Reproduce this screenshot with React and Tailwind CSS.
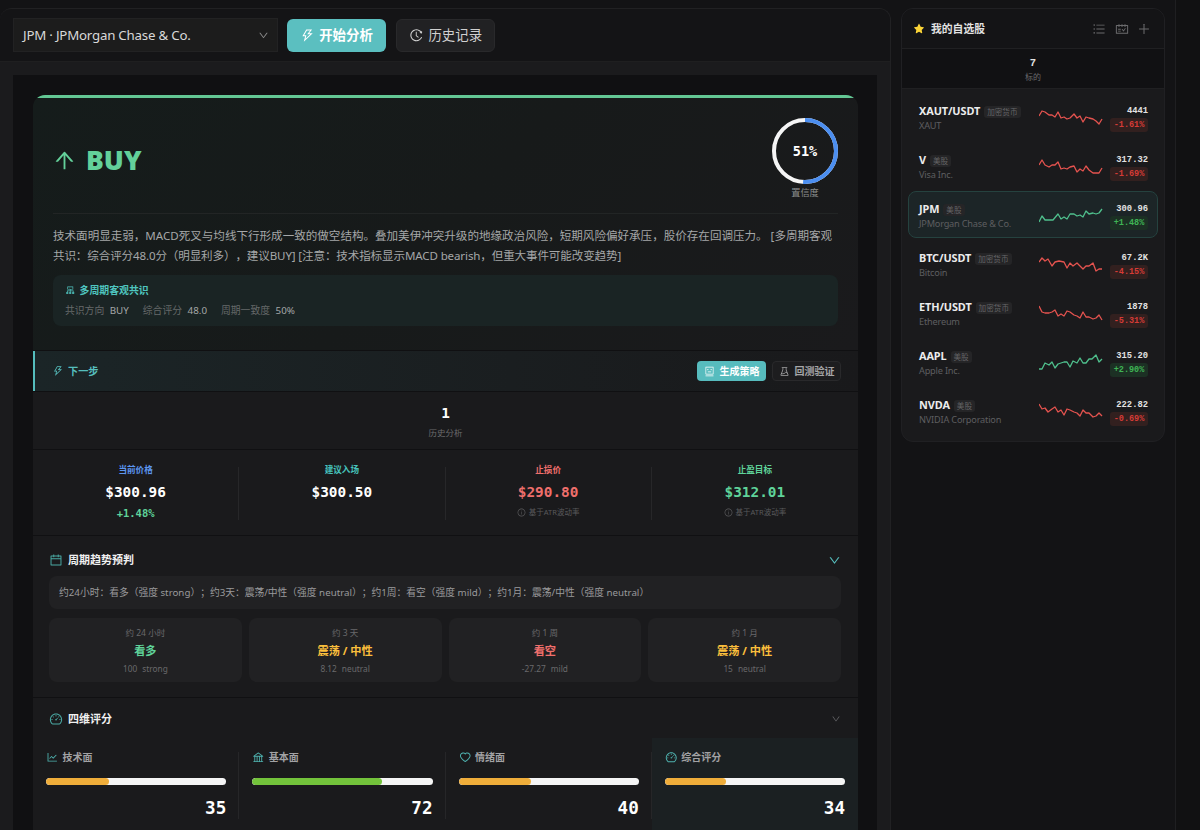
import React from "react";
import {
  AiFillStar,
  AiOutlineArrowUp,
  AiOutlineBank,
  AiOutlineCalendar,
  AiOutlineCluster,
  AiOutlineDashboard,
  AiOutlineDown,
  AiOutlineExperiment,
  AiOutlineHeart,
  AiOutlineHistory,
  AiOutlineInfoCircle,
  AiOutlineLineChart,
  AiOutlinePlus,
  AiOutlineRobot,
  AiOutlineSchedule,
  AiOutlineThunderbolt,
  AiOutlineUnorderedList,
} from "react-icons/ai";

const watchlist = [
  { symbol: "XAUT/USDT", tag: "加密货币", name: "XAUT", price: "4441", change: "-1.61%", points: "0,9 3,4 6,5 10,8 13,8 16,10 19,5 22,11 25,10 28,12 31,11 35,7 38,11 41,9 44,15 47,10 50,11 54,12 57,14 60,17 63,12" },
  { symbol: "V", tag: "美股", name: "Visa Inc.", price: "317.32", change: "-1.69%", points: "0,9 3,4 6,9 10,11 13,9 16,9 19,6 22,13 25,12 28,13 31,11 35,10 38,16 41,13 44,15 47,10 50,14 54,17 57,17 60,17 63,12" },
  { symbol: "JPM", tag: "美股", name: "JPMorgan Chase & Co.", price: "300.96", change: "+1.48%", up: true, active: true, points: "0,17 3,11 6,15 10,15 14,15 19,9 22,14 25,12 28,14 31,9 35,9 38,11 41,10 44,12 47,6 50,9 54,8 57,9 60,8 63,4" },
  { symbol: "BTC/USDT", tag: "加密货币", name: "Bitcoin", price: "67.2K", change: "-4.15%", points: "0,8 3,4 6,7 9,5 13,12 16,8 20,7 25,8 28,14 31,9 34,12 38,9 41,12 44,15 47,12 50,12 54,9 57,17 60,15 63,15" },
  { symbol: "ETH/USDT", tag: "加密货币", name: "Ethereum", price: "1878", change: "-5.31%", points: "0,3 3,9 6,10 10,10 13,9 16,7 19,13 22,11 25,13 28,8 31,9 35,12 38,13 41,15 44,9 47,14 50,14 54,16 57,15 60,12 63,17" },
  { symbol: "AAPL", tag: "美股", name: "Apple Inc.", price: "315.20", change: "+2.90%", up: true, points: "0,17 3,17 6,11 10,13 13,10 16,16 19,12 22,11 25,10 28,10 31,15 34,9 38,11 41,6 44,11 47,11 50,7 53,7 57,3 60,10 63,7" },
  { symbol: "NVDA", tag: "美股", name: "NVIDIA Corporation", price: "222.82", change: "-0.69%", points: "0,3 3,8 6,7 9,11 13,8 16,6 19,11 22,9 25,14 28,8 31,9 35,11 38,12 41,15 44,9 47,12 50,12 54,16 57,15 60,12 63,15" },
];

const prices = [
  { label: "当前价格", value: "$300.96", labelColor: "text-[#5c96f0]", color: "text-white", change: "+1.48%" },
  { label: "建议入场", value: "$300.50", labelColor: "text-[#46c3bd]", color: "text-white" },
  { label: "止损价", value: "$290.80", labelColor: "text-[#ef6f6c]", color: "text-[#ef6f6c]", note: true },
  { label: "止盈目标", value: "$312.01", labelColor: "text-[#5fd39a]", color: "text-[#5fd39a]", note: true },
];

const trends = [
  { label: "约 24 小时", value: "看多", color: "text-[#5fd39a]", score: "100", level: "strong" },
  { label: "约 3 天", value: "震荡 / 中性", color: "text-[#fbbf3c]", score: "8.12", level: "neutral" },
  { label: "约 1 周", value: "看空", color: "text-[#ef6f6c]", score: "-27.27", level: "mild" },
  { label: "约 1 月", value: "震荡 / 中性", color: "text-[#fbbf3c]", score: "15", level: "neutral" },
];

const scores = [
  { label: "技术面", icon: AiOutlineLineChart, value: 35, bar: "bg-[#efad3a]" },
  { label: "基本面", icon: AiOutlineBank, value: 72, bar: "bg-[#73c33b]" },
  { label: "情绪面", icon: AiOutlineHeart, value: 40, bar: "bg-[#efad3a]" },
  { label: "综合评分", icon: AiOutlineDashboard, value: 34, bar: "bg-[#efad3a]", total: true },
];

const Toolbar = () => (
  <div className="flex h-[53px] items-center border-b border-[#1f1f20] bg-[#141416] pl-[13px]">
    <div className="flex h-[34px] w-[265px] items-center justify-between border border-[#222223] bg-[#1c1c1c] pr-[8px] pl-[9px]">
      <span className="pt-px text-[13.3px] tracking-[-0.22px] text-[#d8d8d8]">JPM · JPMorgan Chase &amp; Co.</span>
      <AiOutlineDown className="text-[11px] text-[#8a8a8a]" />
    </div>
    <button className="ml-[9px] flex h-[33px] w-[99px] items-center justify-center gap-[4px] rounded-md bg-[#5bbfc0] text-[13.4px] font-bold text-white">
      <AiOutlineThunderbolt className="text-[15px]" />
      <span>开始分析</span>
    </button>
    <button className="ml-[10px] flex h-[33px] w-[99px] items-center justify-center gap-[5px] rounded-md border border-[#29292b] bg-[#212123] text-[13.4px] text-[#d0d0d0]">
      <AiOutlineHistory className="text-[14.5px]" />
      <span>历史记录</span>
    </button>
  </div>
);

const ConfidenceRing = () => (
  <div className="flex w-[66px] flex-col items-center">
    <div className="grid size-[66px] place-items-center">
      <svg viewBox="0 0 66 66" className="col-start-1 row-start-1 size-[66px]" fill="none" strokeWidth="4">
        <circle cx="33" cy="33" r="31" stroke="#f5f5f5" />
        <circle cx="33" cy="33" r="31" stroke="#4b8ef0" pathLength="100" strokeDasharray="51 100" transform="rotate(-90 33 33)" />
      </svg>
      <span className="col-start-1 row-start-1 font-['DejaVu_Sans_Mono',monospace] text-[13.5px] font-bold text-white">51%</span>
    </div>
    <span className="mt-[2px] text-[9.2px] leading-[14px] text-[#8b8d8d]">置信度</span>
  </div>
);

const Decision = () => (
  <section className="h-[255px] overflow-hidden rounded-t-xl bg-linear-135 from-[#151c1b] via-[#171a1a] to-[#1a1a1c]">
    <div className="h-[3px] bg-[#63c794]" />
    <div className="px-[20px]">
      <div className="flex h-[116px] items-start justify-between border-b border-[#222525] pt-[20px]">
        <div className="flex items-center gap-[9px] pt-[22px] text-[#63d09a]">
          <AiOutlineArrowUp className="-ml-px text-[25px]" />
          <span className="font-['Noto_Sans','Open_Sans',sans-serif] text-[26.5px] leading-[40px] font-black">BUY</span>
        </div>
        <ConfidenceRing />
      </div>
      <p className="mt-[12px] text-[11.55px] leading-[20.3px] whitespace-nowrap text-[#a5a7a8] [text-spacing-trim:space-all]">
        技术面明显走弱，MACD死叉与均线下行形成一致的做空结构。叠加美伊冲突升级的地缘政治风险，短期风险偏好承压，股价存在回调压力。 [多周期客观
        <br />
        <span className="tracking-[-0.12px]">共识：综合评分48.0分（明显利多），建议BUY] [注意：技术指标显示MACD bearish，但重大事件可能改变趋势]</span>
      </p>
      <div className="mt-[8px] h-[51px] rounded-lg bg-[#1a2424] pt-[8px] pl-[12px]">
        <div className="flex h-[16px] items-center gap-[4px] text-[#4fc4bf]">
          <AiOutlineCluster className="text-[10.5px]" />
          <span className="text-[9.9px] font-bold">多周期客观共识</span>
        </div>
        <div className="mt-[4px] flex gap-[14px] text-[9.8px] leading-[16px] text-[#66696a]">
          <span>共识方向 <b className="ml-[3px] font-normal text-[#a5a7a8]">BUY</b></span>
          <span>综合评分 <b className="ml-[3px] font-normal text-[#a5a7a8]">48.0</b></span>
          <span>周期一致度 <b className="ml-[3px] font-normal text-[#a5a7a8]">50%</b></span>
        </div>
      </div>
    </div>
  </section>
);

const NextStep = () => (
  <section className="flex h-[40px] items-center border-l-2 border-[#55bdbd] bg-linear-to-r from-[#1b2527] to-[#19191b] pr-[17px] pl-[17px]">
    <AiOutlineThunderbolt className="text-[12px] text-[#56bebd]" />
    <span className="ml-[4px] pt-px text-[10.2px] font-bold text-[#56bebd]">下一步</span>
    <button className="ml-auto flex h-[20px] w-[69px] items-center justify-center gap-[5px] rounded bg-[#57bcbe] text-[10px] font-bold text-white">
      <AiOutlineRobot className="text-[11px]" />
      生成策略
    </button>
    <button className="ml-[6px] flex h-[20px] w-[69px] items-center justify-center gap-[5px] rounded border border-[#29292b] bg-[#1d1d1f] text-[10px] font-bold text-[#a6a6a8]">
      <AiOutlineExperiment className="text-[11px]" />
      回测验证
    </button>
  </section>
);

const PriceRow = () => (
  <section className="grid h-[85px] grid-cols-4 bg-[#1a1a1c]">
    {prices.map((item, index) => (
      <div key={index} className="flex py-[17px]">
        <div className="-mt-[4px] flex flex-1 flex-col items-center">
          <span className={`text-[8.6px] leading-[14px] font-bold ${item.labelColor}`}>{item.label}</span>
          <span className={`mt-[5px] font-['DejaVu_Sans_Mono',monospace] text-[14.4px] leading-[20px] font-bold ${item.color}`}>{item.value}</span>
          {item.change && (
            <span className="mt-[4px] font-['DejaVu_Sans_Mono',monospace] text-[10.5px] leading-[14px] font-bold text-[#5fd39a]">{item.change}</span>
          )}
          {item.note && (
            <span className="mt-[4px] flex items-center gap-[3px] text-[7.5px] leading-[13px] text-[#59595b]">
              <AiOutlineInfoCircle className="text-[9px]" />
              基于ATR波动率
            </span>
          )}
        </div>
        {index < 3 && <div className="w-px bg-[#272729]" />}
      </div>
    ))}
  </section>
);

const TrendSection = () => (
  <section className="h-[161px] bg-[#1a1a1c] pr-[17px] pl-[16px]">
    <div className="flex h-[40px] items-center pt-[8px]">
      <AiOutlineCalendar className="text-[14px] text-[#4aa9a3]" />
      <span className="ml-[5px] text-[11px] font-bold text-[#f0f0f0]">周期趋势预判</span>
      <AiOutlineDown className="ml-auto text-[13px] text-[#56bebd]" />
    </div>
    <div className="flex h-[33px] items-center rounded-lg bg-[#212123] px-[10px] pt-px text-[9.75px] whitespace-nowrap text-[#9a9a9c] [text-spacing-trim:space-all]">
      约24小时：看多（强度 strong）；约3天：震荡/中性（强度 neutral）；约1周：看空（强度 mild）；约1月：震荡/中性（强度 neutral）
    </div>
    <div className="mt-[9px] grid grid-cols-4 gap-[7px]">
      {trends.map((item, index) => (
        <div key={index} className="flex h-[64px] flex-col items-center rounded-lg bg-[#212123] pt-[8px]">
          <span className="text-[8.5px] leading-[14px] text-[#69696b]">{item.label}</span>
          <span className={`mt-[2px] text-[11.2px] leading-[18px] font-bold ${item.color}`}>{item.value}</span>
          <span className="mt-[2px] flex gap-[5px] text-[8.3px] leading-[14px] text-[#69696b]">
            <span>{item.score}</span>
            <span>{item.level}</span>
          </span>
        </div>
      ))}
    </div>
  </section>
);

const ScoreSection = () => (
  <section className="h-[132px] bg-[#1a1a1c]">
    <div className="flex h-[40px] items-center pt-[2px] pr-[17px] pl-[16px]">
      <AiOutlineDashboard className="text-[14px] text-[#4aa9a3]" />
      <span className="ml-[5px] text-[11px] font-bold text-[#f0f0f0]">四维评分</span>
      <AiOutlineDown className="ml-auto text-[10px] text-[#666668]" />
    </div>
    <div className="grid h-[92px] grid-cols-4">
      {scores.map((item, index) => (
        <div key={index} className={`flex py-[14px] ${item.total ? "bg-[#1b2022]" : ""}`}>
          <div className="flex-1 pr-[12px] pl-[13px]">
            <div className="-mt-[4px] flex h-[18px] items-center gap-[4px]">
              <item.icon className="text-[12.5px] text-[#4fb3b0]" />
              <span className="text-[10px] font-bold text-[#a2a2a4]">{item.label}</span>
            </div>
            <div className="mt-[12px] h-[7px] overflow-hidden rounded-full bg-[#f5f5f5]">
              <div className={`h-full rounded-full ${item.bar}`} style={{ width: `${item.value}%` }} />
            </div>
            <div className="mt-[12px] text-right font-['DejaVu_Sans_Mono',monospace] text-[17.6px] leading-[22px] font-bold text-white">{item.value}</div>
          </div>
          <div className={`w-px ${item.total ? "" : "bg-[#262628]"}`} />
        </div>
      ))}
    </div>
  </section>
);

const WatchRow = ({ item }) => (
  <div className={`flex h-[47px] items-center rounded-lg border pr-[9px] pl-[10px] ${item.active ? "border-[#25423f] bg-[#1c2527]" : "border-transparent"}`}>
    <div className="w-[119.5px] pt-[2px] whitespace-nowrap">
      <div className="flex items-center gap-[4px]">
        <span className="text-[10.9px] leading-[15px] font-bold tracking-[-0.1px] text-[#ececec]">{item.symbol}</span>
        <span className="mt-[3px] rounded-[3px] bg-[#252527] px-[3px] text-[7.6px] leading-[12px] text-[#646466]">{item.tag}</span>
      </div>
      <div className="pt-px text-[9.2px] leading-[14px] tracking-[-0.2px] text-[#5e5e60]">{item.name}</div>
    </div>
    <svg viewBox="0 0 64 20" className="h-[20px] w-[64px]" fill="none">
      <polyline points={item.points} stroke={item.up ? "#4fc08d" : "#e5534f"} strokeWidth="1.3" strokeLinejoin="round" />
    </svg>
    <div className="ml-auto flex flex-col items-end pt-[2px] font-['Liberation_Mono',monospace]">
      <span className="text-[8.8px] leading-[14px] font-bold text-[#e2e2e2]">{item.price}</span>
      <span className={`w-[38px] rounded-[3px] text-center text-[8.5px] leading-[14px] font-bold ${item.up ? "bg-[#1c3024] text-[#3fb455]" : "bg-[#32201f] text-[#d53b36]"}`}>{item.change}</span>
    </div>
  </div>
);

const Watchlist = () => (
  <aside className="mt-[8px] ml-[10px] flex h-[434px] w-[264px] flex-col overflow-hidden rounded-xl border border-[#202023] bg-[#1a1a1c]">
    <div className="flex h-[40px] items-center border-b border-[#202022] bg-[#141416] pr-[13px] pl-[11px]">
      <AiFillStar className="text-[12px] text-[#fbd437]" />
      <span className="ml-[6px] pt-px text-[10.8px] font-bold text-[#e2e2e2]">我的自选股</span>
      <div className="ml-auto flex gap-[8.5px] text-[14px] text-[#6b6b6d]">
        <AiOutlineUnorderedList />
        <AiOutlineSchedule />
        <AiOutlinePlus />
      </div>
    </div>
    <div className="flex h-[40px] flex-col items-center border-b border-[#202022] bg-[#111113] pt-[7px]">
      <span className="font-['Liberation_Mono',monospace] text-[10.5px] leading-[14px] font-bold text-[#e2e2e2]">7</span>
      <span className="text-[8px] leading-[14px] text-[#6a6a6c]">标的</span>
    </div>
    <div className="flex flex-col gap-[2px] px-[6px] pt-[4px]">
      {watchlist.map((item) => (
        <WatchRow key={item.symbol} item={item} />
      ))}
    </div>
  </aside>
);

const App = () => {
  return (
    <div className="flex h-[830px] w-[1200px] overflow-hidden bg-[#131315] font-['Noto_Sans','Noto_Sans_CJK_SC',sans-serif]">
      <div className="flex w-[1176px] border-r border-[#1f1f21]">
        <main className="mt-[8px] w-[891px] overflow-hidden rounded-t-xl border-t border-r border-[#212123] bg-[#1b1b1d]">
          <Toolbar />
          <div className="mt-[13px] ml-[13px] w-[864px] bg-[#101012] px-[20px] pt-[20px]">
            <div className="flex w-[825px] flex-col gap-px">
              <Decision />
              <NextStep />
              <section className="flex h-[57px] flex-col items-center bg-[#1a1a1c] pt-[11px]">
                <span className="font-['DejaVu_Sans_Mono',monospace] text-[14.4px] leading-[20px] font-bold text-white">1</span>
                <span className="mt-[3px] text-[8.5px] leading-[14px] text-[#6a6a6c]">历史分析</span>
              </section>
              <PriceRow />
              <TrendSection />
              <ScoreSection />
            </div>
          </div>
        </main>
        <Watchlist />
      </div>
      <div className="flex-1 bg-[#111112]" />
    </div>
  );
};

export default App;
